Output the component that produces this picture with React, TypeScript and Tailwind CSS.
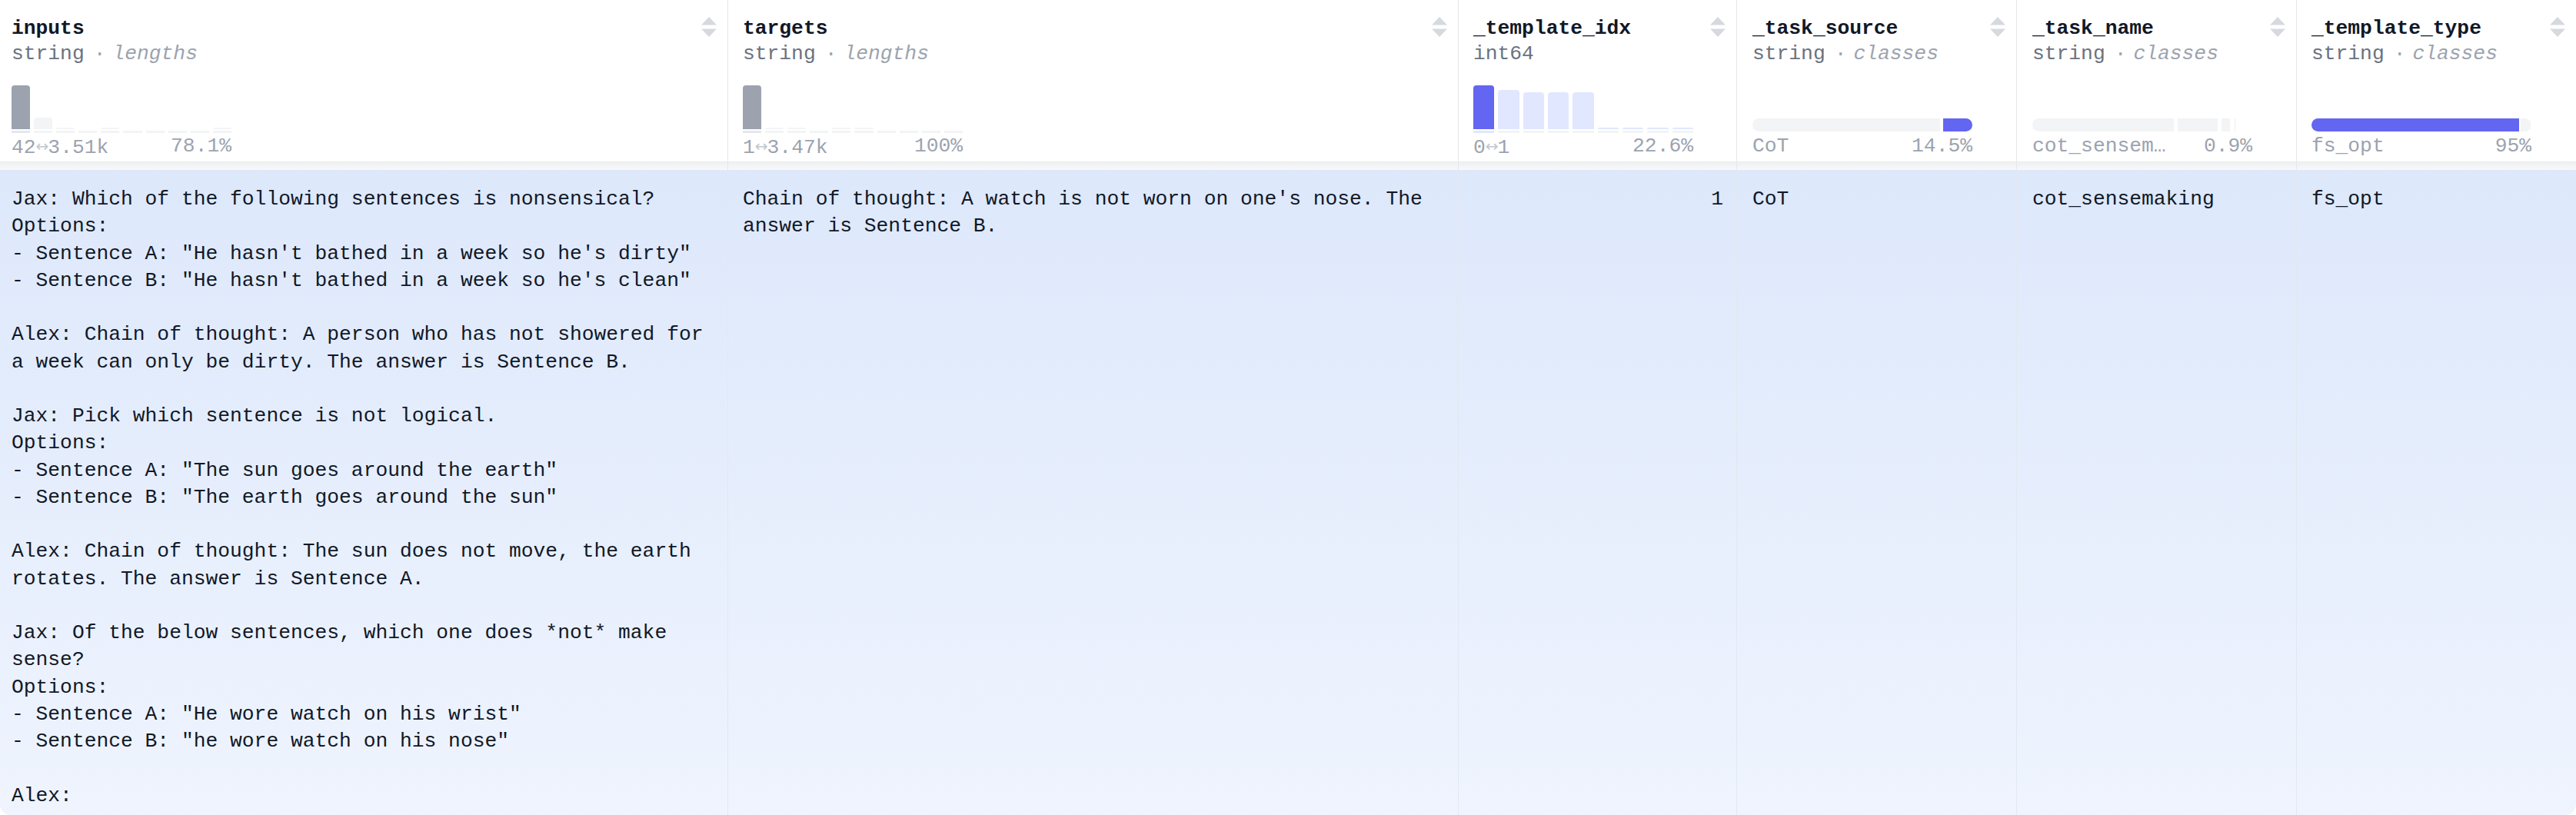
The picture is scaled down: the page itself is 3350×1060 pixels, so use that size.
import React from "react";

type Col = {
  name: string;
  type: string;
  kind: string | null;
  chart:
    | { t: "hist"; bars: number[]; colors: string[]; base: string }
    | { t: "class"; segs: { w: number; c: string }[]; gap: number };
  left: React.ReactNode;
  right: string;
  width: string;
  pl: string;
};

const FONT = { fontFamily: '"Liberation Mono", "DejaVu Sans Mono", monospace' };

function SortIcon() {
  return (
    <svg width="20" height="26" viewBox="0 0 20 26" className="mt-[2px] shrink-0">
      <path d="M10 0 L20 10.5 L0 10.5 Z" fill="#d6d9de" />
      <path d="M10 26 L20 15.5 L0 15.5 Z" fill="#d6d9de" />
    </svg>
  );
}

function Arrow() {
  return (
    <span
      className="inline-block w-[15.8px] text-center text-[#c3c7ce] text-[20px] align-[2px]"
      style={{ fontFamily: '"DejaVu Sans", sans-serif' }}
    >
      ↔
    </span>
  );
}

const inputsText = `Jax: Which of the following sentences is nonsensical?
Options:
- Sentence A: "He hasn't bathed in a week so he's dirty"
- Sentence B: "He hasn't bathed in a week so he's clean"

Alex: Chain of thought: A person who has not showered for a week can only be dirty. The answer is Sentence B.

Jax: Pick which sentence is not logical.
Options:
- Sentence A: "The sun goes around the earth"
- Sentence B: "The earth goes around the sun"

Alex: Chain of thought: The sun does not move, the earth rotates. The answer is Sentence A.

Jax: Of the below sentences, which one does *not* make sense?
Options:
- Sentence A: "He wore watch on his wrist"
- Sentence B: "he wore watch on his nose"

Alex:`;

const G = "#f3f4f6";
const GD = "#9ca3af";
const I = "#6366f1";
const IL = "#e0e7ff";

const cols: Col[] = [
  {
    name: "inputs",
    type: "string",
    kind: "lengths",
    chart: {
      t: "hist",
      bars: [57, 15, 2, 0, 2, 0, 0, 0, 0, 2],
      colors: [GD, G, G, G, G, G, G, G, G, G],
      base: "#e5e7eb",
    },
    left: (
      <>
        42
        <Arrow />
        3.51k
      </>
    ),
    right: "78.1%",
    width: "947px",
    pl: "pl-[15px]",
  },
  {
    name: "targets",
    type: "string",
    kind: "lengths",
    chart: {
      t: "hist",
      bars: [57, 2, 2, 0, 2, 2, 0, 0, 0, 0],
      colors: [GD, G, G, G, G, G, G, G, G, G],
      base: "#e5e7eb",
    },
    left: (
      <>
        1
        <Arrow />
        3.47k
      </>
    ),
    right: "100%",
    width: "950px",
    pl: "pl-[19px]",
  },
  {
    name: "_template_idx",
    type: "int64",
    kind: null,
    chart: {
      t: "hist",
      bars: [57, 51, 48, 48, 48, 2, 2, 2, 2],
      colors: [I, IL, IL, IL, IL, IL, IL, IL, IL],
      base: IL,
    },
    left: (
      <>
        0
        <Arrow />1
      </>
    ),
    right: "22.6%",
    width: "362px",
    pl: "pl-[19px]",
  },
  {
    name: "_task_source",
    type: "string",
    kind: "classes",
    chart: {
      t: "class",
      segs: [
        { w: 244, c: G },
        { w: 38, c: I },
      ],
      gap: 4,
    },
    left: "CoT",
    right: "14.5%",
    width: "364px",
    pl: "pl-[20px]",
  },
  {
    name: "_task_name",
    type: "string",
    kind: "classes",
    chart: {
      t: "class",
      segs: [
        { w: 184, c: G },
        { w: 52, c: G },
        { w: 11, c: G },
        { w: 3, c: "#f7f8f9" },
      ],
      gap: 5,
    },
    left: "cot_sensem…",
    right: "0.9%",
    width: "364px",
    pl: "pl-[20px]",
  },
  {
    name: "_template_type",
    type: "string",
    kind: "classes",
    chart: {
      t: "class",
      segs: [
        { w: 270, c: I },
        { w: 13, c: G },
      ],
      gap: 2,
    },
    left: "fs_opt",
    right: "95%",
    width: "363px",
    pl: "pl-[19px]",
  },
];

function Chart({ chart }: { chart: Col["chart"] }) {
  if (chart.t === "hist") {
    return (
      <div className="h-[87px] w-[286px] flex flex-col justify-end">
        <div className="h-[57px] flex items-end gap-[5px]">
          {chart.bars.map((h, i) => (
            <div
              key={i}
              className="flex-1 rounded-t-[4px]"
              style={{ height: h, backgroundColor: chart.colors[i] }}
            />
          ))}
        </div>
        <div className="mt-[2px] h-[3px] flex gap-[5px]">
          {chart.bars.map((_, i) => (
            <div
              key={i}
              className="flex-1"
              style={{ backgroundColor: i === 0 ? chart.base : "#f3f4f6" }}
            />
          ))}
        </div>
      </div>
    );
  }
  return (
    <div className="h-[87px] w-[286px] flex flex-col justify-end pb-[2px]">
      <div className="h-[17px] flex rounded-full overflow-hidden" style={{ gap: chart.gap }}>
        {chart.segs.map((s, i) => (
          <div key={i} className="h-full" style={{ width: s.w, backgroundColor: s.c }} />
        ))}
      </div>
    </div>
  );
}

export default function App() {
  return (
    <div
      className="w-[3350px] h-[1060px] overflow-hidden bg-white rounded-b-[14px] text-[26.3px]"
      style={FONT}
    >
      <div className="grid grid-cols-[947px_950px_362px_364px_364px_363px] grid-rows-[210px_11px_839px]">
        {cols.map((c, i) => (
          <div
            key={"h" + i}
            className={`${c.pl} pr-[14px] pt-[20px] flex flex-col bg-white ${
              i < cols.length - 1 ? "border-r border-[#e5e7eb]" : ""
            }`}
          >
            <div className="flex items-start justify-between h-[34px]">
              <span className="font-bold text-[#111827] leading-[34px]">{c.name}</span>
              <SortIcon />
            </div>
            <div className="leading-[32px] h-[32px] whitespace-nowrap">
              <span className="text-[#6b7280]">{c.type}</span>
              {c.kind && (
                <>
                  <span className="text-[#9ca3af] ml-[12px] mr-[9px]">·</span>
                  <span className="italic text-[#9ca3af]">{c.kind}</span>
                </>
              )}
            </div>
            <Chart chart={c.chart} />
            <div className="w-[286px] flex justify-between leading-[34px] text-[#9ca3af] whitespace-nowrap">
              <span>{c.left}</span>
              <span>{c.right}</span>
            </div>
          </div>
        ))}
        {cols.map((c, i) => (
          <div
            key={"s" + i}
            className={`bg-gradient-to-b from-[#eef0f2] to-[#f8f9fa] border-t border-[#e9ebee] ${
              i < cols.length - 1 ? "border-r border-r-[#e5e7eb]" : ""
            }`}
          />
        ))}
        {cols.map((c, i) => (
          <div
            key={"r" + i}
            className={`bg-gradient-to-b from-[#dde8fb] to-[#eff4fe] pt-[21px] leading-[35.25px] text-[#111827] whitespace-pre-wrap ${
              i === 0 ? "pl-[15px] pr-[14px]" : i === 2 ? "pr-[17px] text-right" : `${c.pl} pr-[14px]`
            } ${i < cols.length - 1 ? "border-r border-[#e2e8f0]" : ""}`}
          >
            {i === 0 && inputsText}
            {i === 1 && "Chain of thought: A watch is not worn on one's nose. The answer is Sentence B."}
            {i === 2 && "1"}
            {i === 3 && "CoT"}
            {i === 4 && "cot_sensemaking"}
            {i === 5 && "fs_opt"}
          </div>
        ))}
      </div>
    </div>
  );
}
